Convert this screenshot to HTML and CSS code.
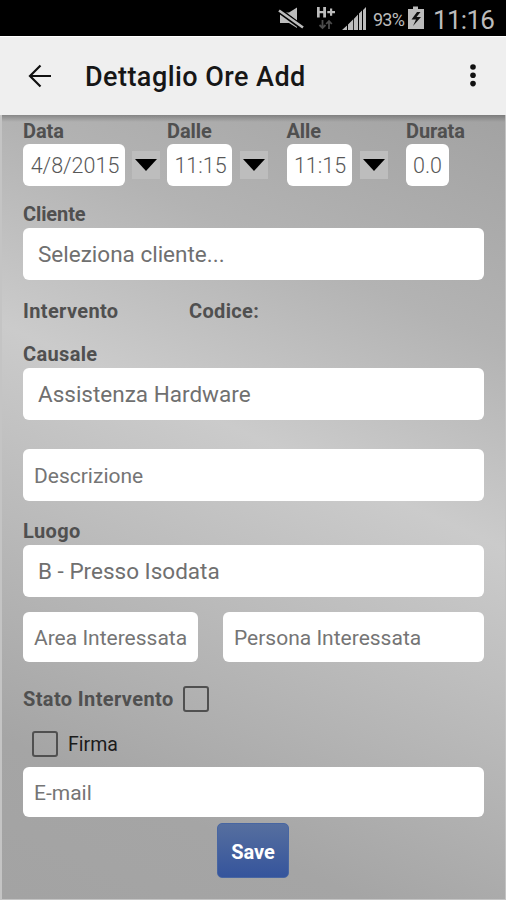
FILE: index.html
```
<!DOCTYPE html>
<html lang="it">
<head>
<meta charset="utf-8">
<title>Dettaglio Ore Add</title>
<link rel="stylesheet" href="styles.css">
</head>
<body>
<div class="status">
  <svg class="status-icons" width="102" height="36" viewBox="0 0 102 36">
    <g fill="#bcbcbc">
      <path d="M4 12.500h9l8-5v20.500l-8-5H4z"/>
      <path d="M3 8.500L27 26.500" stroke="#000" stroke-width="2.600"/>
      <path d="M3 10.800L27 28.300" stroke="#000" stroke-width="5"/>
      <path d="M3 10.500L27 27.500" stroke="#bcbcbc" stroke-width="2.600"/>
      <path d="M41 7h2.700v4h3.500V7H50v10.500h-2.800v-4.200h-3.500v4.200H41zM54 8.500h2.200v2.600H59v2.100h-2.800v2.600H54v-2.600h-2.700v-2.100H54z"/>
      <path d="M46.500 20v8m-3-3 3 3 3-3M53 29v-8m-2.800 3 2.800-3 2.800 3" fill="none" stroke="#4c4c4c" stroke-width="1.800"/>
      <path d="M66 30l5-4.500V30zM72 24.500l5-5V30h-5zM77.800 19l4.200-4.500V30h-4.200zM83 13.500l3-3V30h-3zM87 10l3-3v23h-3z"/>
    </g>
  </svg>
  <span class="percent">93%</span>
  <svg class="battery" width="18" height="36" viewBox="0 0 18 36">
    <path d="M6 6.500h5V9h6v20H1V9h5z" fill="#bcbcbc"/>
    <path d="M10 12L4.500 19.500H9L6 26l8-9h-4.500l4-5z" fill="#111"/>
  </svg>
  <span class="clock">11:16</span>
</div>
<header class="appbar">
  <svg class="back" width="24" height="24" viewBox="0 0 24 24"><path d="M12.500 1.500L2 12l10.500 10.500M2 12h21" fill="none" stroke="#111" stroke-width="2.200"/></svg>
  <h1>Dettaglio Ore Add</h1>
  <svg class="more" width="8" height="26" viewBox="0 0 8 26"><g fill="#111"><circle cx="4" cy="4" r="2.800"/><circle cx="4" cy="12.300" r="2.800"/><circle cx="4" cy="20.600" r="2.800"/></g></svg>
</header>
<main class="form">
  <div class="times">
    <div class="col date"><b>Data</b><div class="pick"><span class="box">4/8/2015</span><span class="drop"><i></i></span></div></div>
    <div class="col time"><b>Dalle</b><div class="pick"><span class="box">11:15</span><span class="drop"><i></i></span></div></div>
    <div class="col time"><b>Alle</b><div class="pick"><span class="box">11:15</span><span class="drop"><i></i></span></div></div>
    <div class="col length"><b>Durata</b><div class="pick"><span class="box">0.0</span></div></div>
  </div>
  <div class="label client">Cliente</div>
  <div class="field select">Seleziona cliente...</div>
  <div class="codes"><b>Intervento</b><b>Codice:</b></div>
  <div class="label wide">Causale</div>
  <div class="field select">Assistenza Hardware</div>
  <div class="field descr">Descrizione</div>
  <div class="label wide place">Luogo</div>
  <div class="field select">B - Presso Isodata</div>
  <div class="pair"><div class="field area">Area Interessata</div><div class="field person">Persona Interessata</div></div>
  <div class="state"><b>Stato Intervento</b><span class="check"></span></div>
  <div class="sign"><span class="check"></span><span>Firma</span></div>
  <div class="field email">E-mail</div>
  <button class="save">Save</button>
</main>
</body>
</html>
```
FILE: styles.css
```
* { box-sizing: border-box; }
body { margin: 0; width: 506px; height: 900px; overflow: hidden; display: flex; flex-direction: column; font-family: Roboto, sans-serif; background: #efefef; }
.status { height: 36px; flex: none; background: #000; color: #bcbcbc; display: flex; align-items: center; padding-left: 276px; }
.status-icons { flex: none; }
.percent { font-size: 18px; letter-spacing: -0.8px; width: 31px; margin-left: -5px; margin-top: 3px; }
.battery { margin-left: 3px; flex: none; }
.clock { font-size: 26px; margin-left: 8px; margin-top: 3px; letter-spacing: -0.7px; }
.appbar { height: 79px; flex: none; display: flex; align-items: center; padding: 0 29px 0 28px; background: #efefef; border-top: 1px solid #fff; }
.appbar h1 { font-size: 27px; font-weight: 500; margin: 1px 0 0 33px; line-height: 32px; letter-spacing: 0.45px; color: #161616; white-space: nowrap; }
.more { margin-left: auto; }
.form { flex: 1; padding: 6px 21px 0 21px; color: #505050; border-left: 2px solid #c4c4c4; border-right: 1px solid #c4c4c4; border-bottom: 1px solid #c4c4c4; background: linear-gradient(#0000003d, #00000000 7px), linear-gradient(204deg, #a2a2a2, #b3b3b3 23%, #cbcbcb 43%, #b3b3b3 69%, #a5a5a5 84%, #a3a3a3); }
.times { display: flex; height: 83px; }
.col { display: flex; flex-direction: column; }
.date { width: 144px; }
.time { width: 119.500px; }
b, .label { font-size: 20px; line-height: 21px; font-weight: 700; display: block; white-space: nowrap; }
.col b, .client { letter-spacing: -0.1px; }
.wide, .codes b { letter-spacing: 0.35px; }
.state b { letter-spacing: 0.38px; }
.pick { display: flex; align-items: center; margin-top: 2px; }
.box { height: 42px; width: 65px; background: #fff; border-radius: 6px; font-size: 21.500px; line-height: 44px; text-align: center; color: #585858; font-weight: 300; padding-left: 2px; }
.date .box { width: 102px; }
.date .drop { margin-left: 7px; }
.length .box { width: 43px; padding: 0; }
.drop { width: 28px; height: 28px; margin-left: 8px; background: #bdbdbd; display: flex; justify-content: center; align-items: center; }
.drop i { border: 11.500px solid transparent; border-top: 12px solid #000; border-bottom: 0; }
.label { height: 24px; }
.field { background: #fff; border-radius: 6px; height: 52px; line-height: 53px; font-size: 21px; padding-left: 11px; color: #757575; white-space: nowrap; }
.select { padding-left: 15px; font-size: 22.500px; line-height: 53px; color: #707070; }
.codes { display: flex; height: 64px; padding-top: 21px; }
.codes b:first-child { width: 166px; }
.descr { margin-top: 29px; line-height: 54px; }
.place { margin-top: 20px; }
.pair { display: flex; gap: 25px; margin-top: 15px; }
.area { width: 175px; height: 50px; }
.person { flex: 1; height: 50px; }
.check { display: block; width: 26px; height: 26px; border: 2.500px solid #505050; border-radius: 3px; }
.state { display: flex; align-items: center; gap: 9px; height: 26px; margin-top: 24px; }
.sign { display: flex; align-items: center; gap: 10px; height: 26px; margin: 19px 0 10px 9px; color: #1b1b1b; font-size: 19.500px; }
.email { height: 50px; }
.save { display: block; width: 72px; height: 55px; margin: 6px 0 0 194px; padding: 2px 0 0; border: 1px solid #4866a2; border-radius: 5px; background: linear-gradient(#566f9f, #35549c); color: #fff; font: 700 20px Roboto, sans-serif; }
```
